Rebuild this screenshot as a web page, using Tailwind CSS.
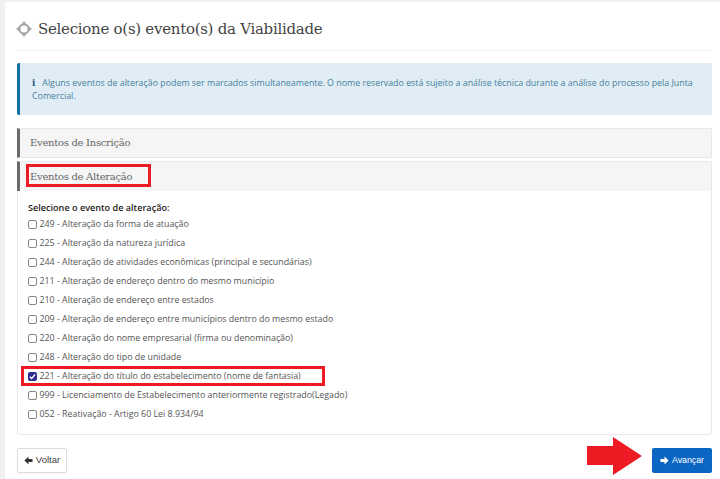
<!DOCTYPE html>
<html><head><meta charset="utf-8">
<script src="https://cdn.jsdelivr.net/npm/@tailwindcss/browser@4"></script></head>
<body class="m-0 bg-[#f0f0f0] font-['Open_Sans',sans-serif] overflow-hidden">
<div class="relative w-[720px] h-[479px] overflow-hidden">
<div class="absolute left-[5px] top-[2px] w-[715px] h-[477px] bg-white"></div>
<div class="relative pl-[17px] pr-[8px] pt-[2px]">
  <div class="h-[49px] border-b border-[#f0f0f0] flex items-center gap-[6px] pt-[6px]">
    <svg width="16" height="16" viewBox="0 0 16 16" class="-ml-px"><g fill="#a8a8a8"><circle cx="8" cy="8" r="4.600" fill="none" stroke="#a8a8a8" stroke-width="2.200"/><path d="M8 0l2.400 3h-4.800zM8 16l2.400-3h-4.800zM0 8l3-2.400v4.800zM16 8l-3-2.400v4.800z"/></g></svg>
    <h1 class="font-['DejaVu_Serif',serif] text-[15px] tracking-[-0.28px] text-[#444] leading-none">Selecione o(s) evento(s) da Viabilidade</h1>
  </div>
  <div class="mt-[12px] h-[52px] bg-[#e0edf5] border-l-[3px] border-[#0f6fa8] rounded-[2px] pl-[12px] pr-[10px] pt-[14px] text-[8.850px] text-[#4a7f9c]">
    <p class="m-0 leading-[12.500px]"><span class="inline-block w-[8px] font-['DejaVu_Serif',serif] font-bold text-[#1f5f85]">i</span> Alguns eventos de alteração podem ser marcados simultaneamente. O nome reservado está sujeito a análise técnica durante a análise do processo pela Junta Comercial.</p>
  </div>
  <div class="mt-[13px] h-[30px] bg-[#f5f5f5] border border-[#e8e8e8] border-l-[3px] border-l-[#6b6b6b] flex items-center pl-[10px] pb-[2px] font-['DejaVu_Serif',serif] text-[10px] tracking-[-0.28px] text-[#666]">Eventos de Inscrição</div>
  <div class="mt-[3px] h-[274px] border border-[#e8e8e8] rounded-b-[3px]">
    <div class="-ml-px -mt-px h-[30px] bg-[#f5f5f5] border-t border-[#e8e8e8] border-l-[3px] border-l-[#6b6b6b] flex items-center pl-[10px] font-['DejaVu_Serif',serif] text-[10px] tracking-[-0.28px] text-[#666]">Eventos de Alteração</div>
    <div class="pl-[10px] pt-[9px]">
      <p class="m-0 h-[15px] text-[9.100px] font-semibold leading-[15px] text-[#222]">Selecione o evento de alteração:</p>
      <ul class="m-0 p-0 list-none text-[8.850px] text-[#555]">
        <li class="h-[19px] flex items-center gap-[3px]"><span class="w-[8.500px] h-[8.500px] border border-[#858585] rounded-[2px] bg-white shrink-0"></span>249 - Alteração da forma de atuação</li>
        <li class="h-[19px] flex items-center gap-[3px]"><span class="w-[8.500px] h-[8.500px] border border-[#858585] rounded-[2px] bg-white shrink-0"></span>225 - Alteração da natureza jurídica</li>
        <li class="h-[19px] flex items-center gap-[3px]"><span class="w-[8.500px] h-[8.500px] border border-[#858585] rounded-[2px] bg-white shrink-0"></span>244 - Alteração de atividades econômicas (principal e secundárias)</li>
        <li class="h-[19px] flex items-center gap-[3px]"><span class="w-[8.500px] h-[8.500px] border border-[#858585] rounded-[2px] bg-white shrink-0"></span>211 - Alteração de endereço dentro do mesmo município</li>
        <li class="h-[19px] flex items-center gap-[3px]"><span class="w-[8.500px] h-[8.500px] border border-[#858585] rounded-[2px] bg-white shrink-0"></span>210 - Alteração de endereço entre estados</li>
        <li class="h-[19px] flex items-center gap-[3px]"><span class="w-[8.500px] h-[8.500px] border border-[#858585] rounded-[2px] bg-white shrink-0"></span>209 - Alteração de endereço entre municípios dentro do mesmo estado</li>
        <li class="h-[19px] flex items-center gap-[3px]"><span class="w-[8.500px] h-[8.500px] border border-[#858585] rounded-[2px] bg-white shrink-0"></span>220 - Alteração do nome empresarial (firma ou denominação)</li>
        <li class="h-[19px] flex items-center gap-[3px]"><span class="w-[8.500px] h-[8.500px] border border-[#858585] rounded-[2px] bg-white shrink-0"></span>248 - Alteração do tipo de unidade</li>
        <li class="h-[19px] flex items-center gap-[3px]"><span class="w-[8.500px] h-[8.500px] rounded-[2px] bg-[#2f2a8f] shrink-0 flex items-center justify-center"><svg width="7" height="7" viewBox="0 0 8 8"><path d="M1 4.200l2 2 4-4.500" fill="none" stroke="#fff" stroke-width="1.600"/></svg></span>221 - Alteração do título do estabelecimento (nome de fantasia)</li>
        <li class="h-[19px] flex items-center gap-[3px]"><span class="w-[8.500px] h-[8.500px] border border-[#858585] rounded-[2px] bg-white shrink-0"></span>999 - Licenciamento de Estabelecimento anteriormente registrado(Legado)</li>
        <li class="h-[19px] flex items-center gap-[3px]"><span class="w-[8.500px] h-[8.500px] border border-[#858585] rounded-[2px] bg-white shrink-0"></span>052 - Reativação - Artigo 60 Lei 8.934/94</li>
      </ul>
    </div>
  </div>
  <div class="mt-[13px] flex justify-between items-center">
    <button class="h-[25px] w-[50px] border border-[#ddd] rounded-[2px] bg-white flex items-center justify-center gap-[3px] text-[9.500px] text-[#444] font-['Liberation_Sans',sans-serif] shadow-[0_1px_1px_rgba(0,0,0,0.05)]"><svg width="9" height="9" viewBox="0 0 10 10"><path d="M5 .5L.5 5 5 9.500V6.800h4.500V3.200H5z" fill="#333"/></svg>Voltar</button>
    <button class="h-[25px] w-[60px] rounded-[2px] bg-[#0b66c3] flex items-center justify-center gap-[3px] text-[8.800px] text-white font-['Liberation_Sans',sans-serif]"><svg width="9" height="9" viewBox="0 0 10 10"><path d="M5 .5L9.500 5 5 9.500V6.800H.5V3.200H5z" fill="#fff"/></svg>Avançar</button>
  </div>
</div>
<div class="absolute left-[26px] top-[164px] w-[125px] h-[23px] border-[3px] border-[#ed1c24]"></div>
<div class="absolute left-[21px] top-[366px] w-[304px] h-[20px] border-[3px] border-[#ed1c24]"></div>
<svg class="absolute left-[587px] top-[437px]" width="55" height="38" viewBox="0 0 55 38"><path d="M0 9H26V0L55 19L26 38V28H0z" fill="#ed1c24"/></svg>
</div>
</body></html>
